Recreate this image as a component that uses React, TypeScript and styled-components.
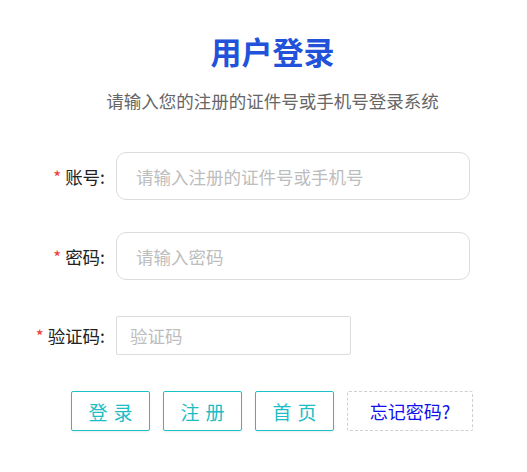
import React from "react";
import styled, { createGlobalStyle } from "styled-components";

const GlobalStyle = createGlobalStyle`
    body {
        margin: 0;
        background: #ffffff;
        font-family: "Noto Sans CJK SC", "Noto Sans", "Liberation Sans", sans-serif;
    }
`;

const Page = styled.div`
    width: 527px;
    height: 472px;
    box-sizing: border-box;
    padding: 31px 0 0 18px;
    display: flex;
    flex-direction: column;
`;

const Title = styled.h1`
    margin: 0;
    font-size: 31px;
    line-height: 40px;
    font-weight: 700;
    text-align: center;
    color: #2152d9;
`;

const Subtitle = styled.p`
    margin: 18px 0 0;
    font-size: 17.5px;
    line-height: 24px;
    text-align: center;
    color: #666666;
`;

const Form = styled.form`
    margin-top: 39px;
    display: flex;
    flex-direction: column;
`;

const Row = styled.div<{ $gap: number }>`
    display: grid;
    grid-template-columns: 87px auto;
    column-gap: 11px;
    align-items: center;
    margin-bottom: ${({ $gap }) => $gap}px;
`;

const Label = styled.label`
    display: flex;
    justify-content: flex-end;
    align-items: center;
    font-size: 17.5px;
    color: #222222;
    white-space: nowrap;
`;

const Star = styled.span`
    color: #f23c3c;
    margin-right: 4px;
    font-size: 17px;
`;

const Input = styled.input<{ $small?: boolean }>`
    box-sizing: border-box;
    width: ${({ $small }) => ($small ? "235px" : "354px")};
    height: ${({ $small }) => ($small ? "39px" : "48px")};
    padding: 0 ${({ $small }) => ($small ? "13px" : "19px")};
    border: 1px solid #dcdcdc;
    border-radius: ${({ $small }) => ($small ? "2px" : "10px")};
    font-size: 17.5px;
    font-family: inherit;
    color: #333333;
    background: #ffffff;

    &::placeholder {
        color: #bdbdbd;
    }

    &:focus {
        outline: none;
        border-color: #19c3c8;
    }
`;

const Buttons = styled.div`
    display: flex;
    gap: 13px;
    padding-left: 53px;
`;

const Button = styled.button`
    box-sizing: border-box;
    width: 79px;
    height: 40px;
    border: 1px solid #1cc2c8;
    border-radius: 2px;
    background: #ffffff;
    color: #1cbdc4;
    font-size: 19px;
    font-family: inherit;
    letter-spacing: 6px;
    text-indent: 6px;
    box-shadow: 0 1px 2px rgba(0, 0, 0, 0.08);
    cursor: pointer;
`;

const ForgotButton = styled.button`
    box-sizing: border-box;
    width: 126px;
    height: 40px;
    border: 1px dashed #cfcfcf;
    border-radius: 2px;
    background: #ffffff;
    color: #1010ee;
    font-size: 18px;
    font-family: inherit;
    cursor: pointer;
`;

export default function App() {
    return (
        <>
            <GlobalStyle />
            <Page>
                <Title>用户登录</Title>
                <Subtitle>请输入您的注册的证件号或手机号登录系统</Subtitle>
                <Form onSubmit={(e) => e.preventDefault()}>
                    <Row $gap={32}>
                        <Label>
                            <Star>*</Star>账号:
                        </Label>
                        <Input placeholder="请输入注册的证件号或手机号" />
                    </Row>
                    <Row $gap={36}>
                        <Label>
                            <Star>*</Star>密码:
                        </Label>
                        <Input type="password" placeholder="请输入密码" />
                    </Row>
                    <Row $gap={36}>
                        <Label>
                            <Star>*</Star>验证码:
                        </Label>
                        <Input $small placeholder="验证码" />
                    </Row>
                    <Buttons>
                        <Button type="submit">登录</Button>
                        <Button type="button">注册</Button>
                        <Button type="button">首页</Button>
                        <ForgotButton type="button">忘记密码?</ForgotButton>
                    </Buttons>
                </Form>
            </Page>
        </>
    );
}
